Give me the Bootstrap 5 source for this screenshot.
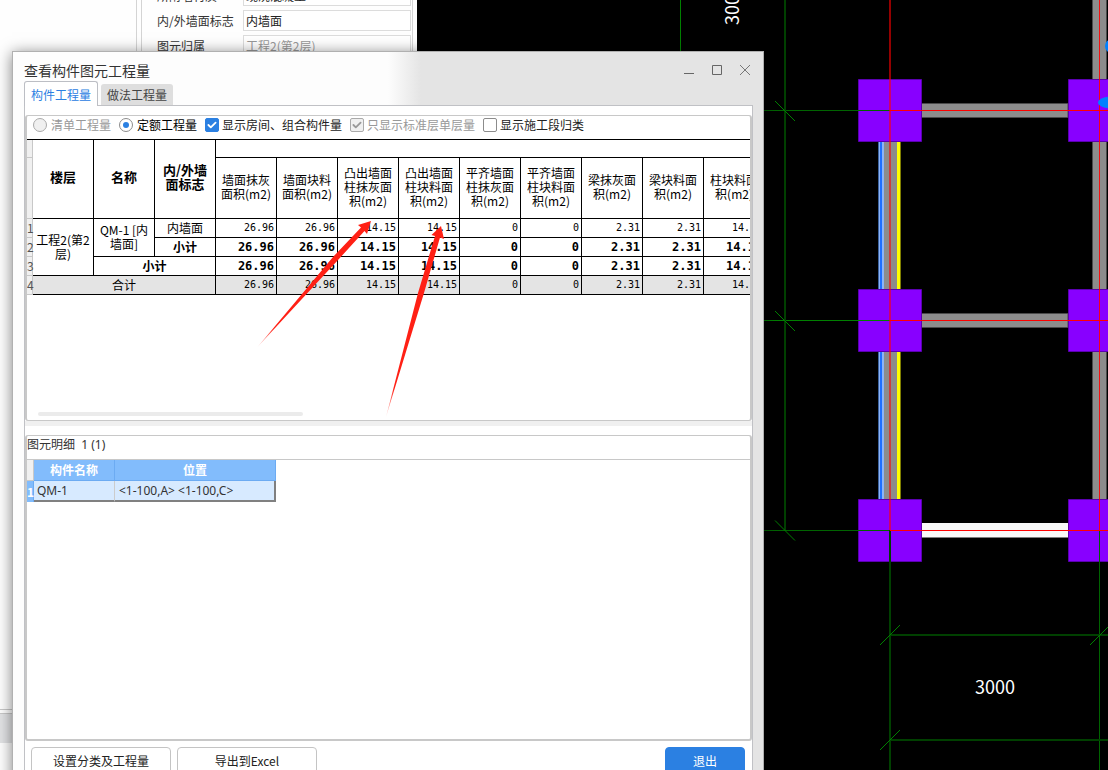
<!DOCTYPE html>
<html lang="zh-CN">
<head>
<meta charset="utf-8">
<meta name="viewport" content="width=device-width, initial-scale=1">
<title>查看构件图元工程量</title>
<link href="https://cdn.jsdelivr.net/npm/bootstrap@5.3.0/dist/css/bootstrap.min.css" rel="stylesheet">
<style>
body{font:12px/18px "Noto Sans CJK SC",sans-serif;color:#333;background:#000}
.workspace{height:100vh}
/* property panel behind the dialog */
.props-side{width:417px;background:#fefefe}
.tree-pane{width:137px;border-right:1px solid #d4d4d4}
.tree-top{height:710px;border-bottom:1px solid #c8c8c8}
.tree-foot{height:30px;margin-top:3px;background:#e2e3e5;border-top:1px solid #c8c8c8}
.props{margin:0 4px 0 4px;border:solid #d4d4d4;border-width:0 1px;padding-left:15px}
.prop-row{height:25px}
.prop-row label{width:86px}
.prop-row input{width:168px;height:21px;padding:0 2px;font-size:12px;border:1px solid #dcdcdc;border-radius:0;background:#fff;color:#222;outline:0}
.prop-row input:disabled{color:#999}
.props-first{margin-top:-17px}
/* dialog */
.dlg{left:12px;right:344px;top:51px;bottom:-16px;border:1px solid #b0b0b0;padding:0 10px 0 11px;background:linear-gradient(90deg,#fdfdfd 375px,#e4e4e4 408px);box-shadow:0 2px 14px rgba(0,0,0,.5)}
.dlg-head{height:29px;padding-top:8px;line-height:20px;font-size:14px}
.win-btns{gap:16px;margin-right:2px;height:20px}
.win-btns button{width:12px;height:20px;line-height:0}
.tab-row{height:24px;gap:3px}
.tab-row .nav-link{padding:0 6px;font-size:12px;color:#444;background:#dedede;border:0;border-radius:3px 3px 0 0;height:21px;line-height:20px}
.tab-row .nav-link.active{color:#2b80e2;background:#fff;border:1px solid #bcbec4;border-bottom:0;height:25px;line-height:23px;margin-bottom:-1px;z-index:1;position:relative}
.pane{border:1px solid #c0c1c5;background:#fff;padding-top:9px}
.grp{border:1px solid #c8c8c8;border-left-width:2px;border-right-width:2px;border-radius:3px}
.opts{height:23px;gap:8px;padding-left:6px;line-height:18px}
.opts .form-check{gap:3px;min-height:0;padding:0;margin:0}
.opts .form-check-input{width:14px;height:14px;margin:0;float:none;border-color:#8c8c8c;box-shadow:none}
.opts .form-check-input[type=radio]{margin-right:1px}
.opts .form-check-input[type=checkbox]{border-radius:2px}
.opts .form-check-input[type=checkbox]:checked{background-color:#2b80e2;border-color:#2b80e2}
.opts .form-check-input:disabled,.opts .form-check-input[type=checkbox]:disabled{background-color:#f0f0f0;border-color:#aaa;opacity:1}
.opts .form-check-input[type=checkbox]:checked:disabled{background-image:url("data:image/svg+xml,%3csvg xmlns='http://www.w3.org/2000/svg' viewBox='0 0 20 20'%3e%3cpath fill='none' stroke='%23999' stroke-linecap='round' stroke-linejoin='round' stroke-width='3' d='m4 10 4 4 8-8'/%3e%3c/svg%3e")}
.opts .form-check-input[type=checkbox]:checked:enabled{background-image:url("data:image/svg+xml,%3csvg xmlns='http://www.w3.org/2000/svg' viewBox='0 0 20 20'%3e%3cpath fill='none' stroke='%23fff' stroke-linecap='round' stroke-linejoin='round' stroke-width='3' d='m4 10 4 4 8-8'/%3e%3c/svg%3e")}
.opts .form-check-input[type=radio]:checked{background-color:#fff;background-image:url("data:image/svg+xml,%3csvg xmlns='http://www.w3.org/2000/svg' viewBox='-4 -4 8 8'%3e%3ccircle r='2' fill='%232b80e2'/%3e%3c/svg%3e")}
.opts .form-check-input:disabled~label{color:#999;opacity:1}
.opts label{color:#222}
.opts .picked{color:#000}
.sheet-box{height:281px;overflow:hidden}
.sheet{table-layout:fixed;width:738px;border-collapse:separate;border-spacing:0;color:#000;line-height:14px;border-top:1px solid #000}
.sheet th,.sheet td{padding:0 2px 1px;border:solid #000;border-width:0 1px 1px 0;height:19px;text-align:center;vertical-align:middle;font-weight:400}
.sheet .rh{padding:0;background:#f0f0f0;border-color:#c8c8c8;color:#555;white-space:nowrap}
.sheet .key{font-weight:700}
.sheet thead .key{font-size:13px;padding-bottom:4px}
.sheet .heads th{height:61px;padding-bottom:2px}
.sheet .num{font:10px/14px "DejaVu Sans Mono",monospace;text-align:right}
.sheet .sub .num{font-size:12px;font-weight:700}
.sheet thead .band{height:18px}
.sheet .total td{background:#e4e4e4}
.hbar{width:265px;height:4px;border-radius:2px;background:#ebebeb;margin:117px 0 0 11px}
.splitter{height:5px;background:#f0f0f0;margin-bottom:9px}
.detail-title{height:24px;line-height:17px;border-bottom:1px solid #c8c8c8;white-space:pre;font-family:"Noto Sans","Noto Sans CJK SC",sans-serif}
.detail{border-bottom-width:2px}
.items{table-layout:fixed;width:249px;border-collapse:separate;border-spacing:0}
.items th,.items td{height:21px;padding:0;line-height:18px}
.items thead th{background:#82bcfc;color:#fff;text-align:center;border:solid #6cabf2;border-width:0 1px 1px 0}
.items thead .rh{background:#f0f0f0;border-color:#c8c8c8}
.items tbody th{background:#82bcfc;color:#fff;border-right:1px solid #6cabf2;line-height:16px}
.items tbody td{font-family:"Noto Sans","Noto Sans CJK SC",sans-serif;background:#d7eaff;padding-left:3px;border-right:1px solid #ccc;border-bottom:2px solid #808080}
.items tbody td:last-child{padding-left:4px;border-right:2px solid #808080}
.dlg-foot{padding:6px 7px 9px 6px;gap:6px}
.dlg-foot .btn{width:140px;height:28px;padding:0;font-size:12px;line-height:24px;border:1px solid #c4c4c4;border-radius:4px;background:#fff;color:#222}
.dlg-foot .btn.quit{width:80px;background:#2b80e2;border-color:#2b80e2;color:#fff}
.marks{left:0;top:0;pointer-events:none}
</style>
</head>
<body>
<main class="workspace d-flex position-relative overflow-hidden">
  <aside class="props-side d-flex flex-shrink-0">
    <div class="tree-pane flex-shrink-0"><div class="tree-top"></div><div class="tree-foot"></div></div>
    <form class="props flex-grow-1">
      <div class="props-first prop-row d-flex align-items-center"><label for="p1">所附墙材质</label><input id="p1" value="现浇混凝土"></div>
      <div class="prop-row d-flex align-items-center"><label for="p2">内/外墙面标志</label><input id="p2" value="内墙面"></div>
      <div class="prop-row d-flex align-items-center"><label for="p3">图元归属</label><input id="p3" value="工程2(第2层)" disabled></div>
    </form>
  </aside>

  <section class="flex-grow-1 overflow-hidden" aria-label="平面图">
    <svg width="100%" height="100%" class="d-block">
      <g transform="translate(-417 0)">
        <g fill="#8c8c8c" stroke="#4a4a4a">
          <path d="M921 103.500H1068V117.500H921zM921 313.500H1068V327.500H921z"/>
          <path d="M1092.500 -1H1106.500V500H1092.500z"/>
        </g>
        <path d="M921 523H1068V537.500H921z" fill="#f8f8f8"/>
        <g>
          <path d="M884 142h13v147h-13zM884 352h13v147h-13z" fill="#8c8c8c"/>
          <path d="M878 142h6v147h-6zM878 352h6v147h-6z" fill="#8cb4f8"/>
          <path d="M881 142v147M881 352v147" stroke="#1e6eff" stroke-width="2"/>
          <path d="M878.500 142v147M878.500 352v147" stroke="#3c64a0"/>
          <path d="M897 142h3v147h-3zM897 352h3v147h-3z" fill="#ff0"/>
          <path d="M900.500 142v147M900.500 352v147" stroke="#808000"/>
        </g>
        <g fill="#80f" stroke="#5a00b0" stroke-width="1">
          <path d="M858.500 79.500h63v62h-63zM858.500 289.500h63v62h-63zM858.500 499.500h63v62h-63zM1068.500 79.500h63v62h-63zM1068.500 289.500h63v62h-63zM1068.500 499.500h63v62h-63z"/>
        </g>
        <g stroke="#008000" fill="none">
          <path d="M680.500 0V60M760 320.500H890" />
          <path d="M760 110.500H890M760 530.500H890M1099.500 530V2000" stroke="#006400"/>
          <path d="M785 0V530M890 530V2000M890 635H3000M890 740H3000" stroke="#004000" stroke-width="2"/>
          <path d="M775 101l20 20M775 311l20 20M775 520.500l20 20M880 645l20-20M1090 645l20-20M880 750l20-20"/>
        </g>
        <g stroke="#f00" fill="none">
          <path d="M890 0V530" stroke-width="2" stroke-opacity=".58"/>
          <path d="M1099.500 0V530" stroke-opacity=".9"/>
          <path d="M890 110.500H3000M890 320.500H3000M890 530.500H3000"/>
        </g>
        <g fill="#0080ff"><ellipse cx="1112" cy="102.500" rx="14" ry="6"/><circle cx="1112" cy="46" r="7"/></g>
        <g fill="#fff" font-size="18"><text x="975" y="694">3000</text><text transform="translate(739 25) rotate(-90)">3000</text></g>
      </g>
    </svg>
  </section>

  <section class="dlg position-absolute d-flex flex-column" role="dialog" aria-labelledby="dlgTitle">
    <header class="dlg-head d-flex justify-content-between">
      <span id="dlgTitle">查看构件图元工程量</span>
      <div class="win-btns d-flex">
        <button class="border-0 bg-transparent p-0" aria-label="最小化"><svg width="12" height="12" fill="none" stroke="#666"><path d="M1 9.500h10"/></svg></button>
        <button class="border-0 bg-transparent p-0" aria-label="最大化"><svg width="12" height="12" fill="none" stroke="#666"><path d="M1.500 1.500h9v9h-9z"/></svg></button>
        <button class="border-0 bg-transparent p-0" aria-label="关闭"><svg width="12" height="12" fill="none" stroke="#777"><path d="M1 1l10 10M11 1L1 11"/></svg></button>
      </div>
    </header>
    <nav class="tab-row nav flex-nowrap align-items-end">
      <button class="nav-link active">构件工程量</button>
      <button class="nav-link">做法工程量</button>
    </nav>

    <div class="pane flex-grow-1 d-flex flex-column">
      <div class="grp">
        <div class="opts d-flex align-items-start text-nowrap">
          <div class="form-check d-flex align-items-center"><input class="form-check-input" type="radio" name="kind" id="o1" disabled><label for="o1">清单工程量</label></div>
          <div class="form-check d-flex align-items-center"><input class="form-check-input" type="radio" name="kind" id="o2" checked><label class="picked" for="o2">定额工程量</label></div>
          <div class="form-check d-flex align-items-center"><input class="form-check-input" type="checkbox" id="o3" checked><label for="o3">显示房间、组合构件量</label></div>
          <div class="form-check d-flex align-items-center"><input class="form-check-input" type="checkbox" id="o4" checked disabled><label for="o4">只显示标准层单层量</label></div>
          <div class="form-check d-flex align-items-center"><input class="form-check-input" type="checkbox" id="o5"><label for="o5">显示施工段归类</label></div>
        </div>
        <div class="sheet-box">
          <table class="sheet">
            <colgroup><col style="width:6px"><col span="12" style="width:61px"></colgroup>
            <thead>
              <tr><th class="rh band"></th><th class="key" rowspan="2">楼层</th><th class="key" rowspan="2">名称</th><th class="key" rowspan="2">内/外墙<br>面标志</th><th class="band" colspan="9"></th></tr>
              <tr class="heads"><th class="rh"></th><th>墙面抹灰<br>面积(m2)</th><th>墙面块料<br>面积(m2)</th><th>凸出墙面<br>柱抹灰面<br>积(m2)</th><th>凸出墙面<br>柱块料面<br>积(m2)</th><th>平齐墙面<br>柱抹灰面<br>积(m2)</th><th>平齐墙面<br>柱块料面<br>积(m2)</th><th>梁抹灰面<br>积(m2)</th><th>梁块料面<br>积(m2)</th><th>柱块料面<br>积(m2)</th></tr>
            </thead>
            <tbody>
              <tr><th class="rh">1</th><td rowspan="3">工程2(第2<br>层)</td><td rowspan="2">QM-1 [内<br>墙面]</td><td>内墙面</td><td class="num">26.96</td><td class="num">26.96</td><td class="num">14.15</td><td class="num">14.15</td><td class="num">0</td><td class="num">0</td><td class="num">2.31</td><td class="num">2.31</td><td class="num">14.15</td></tr>
              <tr class="sub"><th class="rh">2</th><td class="key">小计</td><td class="num">26.96</td><td class="num">26.96</td><td class="num">14.15</td><td class="num">14.15</td><td class="num">0</td><td class="num">0</td><td class="num">2.31</td><td class="num">2.31</td><td class="num">14.15</td></tr>
              <tr class="sub"><th class="rh">3</th><td class="key" colspan="2">小计</td><td class="num">26.96</td><td class="num">26.96</td><td class="num">14.15</td><td class="num">14.15</td><td class="num">0</td><td class="num">0</td><td class="num">2.31</td><td class="num">2.31</td><td class="num">14.15</td></tr>
              <tr class="total"><th class="rh">4</th><td colspan="3">合计</td><td class="num">26.96</td><td class="num">26.96</td><td class="num">14.15</td><td class="num">14.15</td><td class="num">0</td><td class="num">0</td><td class="num">2.31</td><td class="num">2.31</td><td class="num">14.15</td></tr>
            </tbody>
          </table>
          <div class="hbar"></div>
        </div>
      </div>
      <div class="splitter"></div>
      <div class="grp detail flex-grow-1">
        <div class="detail-title">图元明细  1 (1)</div>
        <table class="items">
          <colgroup><col style="width:7px"><col style="width:81px"><col style="width:161px"></colgroup>
          <thead><tr><th class="rh"></th><th>构件名称</th><th>位置</th></tr></thead>
          <tbody><tr><th>1</th><td>QM-1</td><td>&lt;1-100,A&gt; &lt;1-100,C&gt;</td></tr></tbody>
        </table>
      </div>
      <footer class="dlg-foot d-flex">
        <button class="btn">设置分类及工程量</button>
        <button class="btn">导出到Excel</button>
        <button class="btn quit ms-auto">退出</button>
      </footer>
    </div>
  </section>

  <svg class="marks position-absolute" width="100%" height="100%" aria-hidden="true">
    <defs>
      <linearGradient id="fade" x1="0" y1="1" x2="0" y2="0"><stop offset="0" stop-color="#ff2015" stop-opacity=".2"/><stop offset=".15" stop-color="#ff2015"/></linearGradient>
    </defs>
    <g fill="url(#fade)">
      <path d="M371 221L367 234L364.500 231L338 260L257.500 347L333 257L361 227.500L358 225z"/>
      <path d="M441 226L444 239L440 237.500L424 293L386 417L418 293L435 236L431.500 235z"/>
    </g>
  </svg>
</main>
<script src="https://cdn.jsdelivr.net/npm/bootstrap@5.3.0/dist/js/bootstrap.bundle.min.js"></script>
</body>
</html>
